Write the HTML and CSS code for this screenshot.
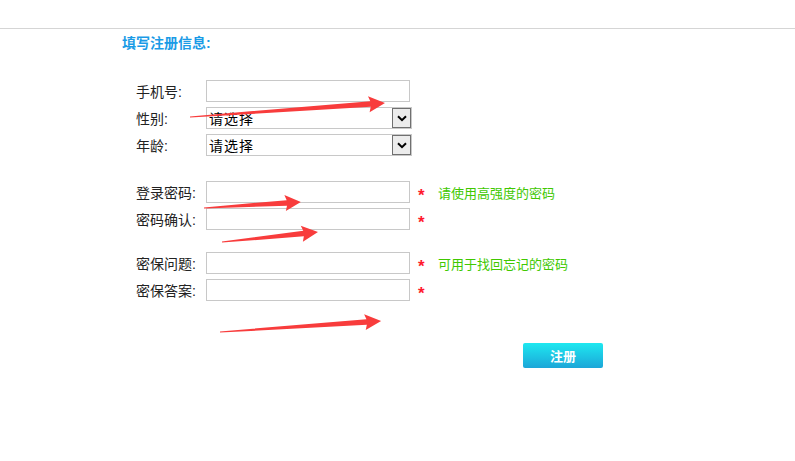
FILE: index.html
```html
<!DOCTYPE html>
<html lang="zh-CN">
  <head>
    <meta charset="UTF-8" />
    <meta name="viewport" content="width=device-width, initial-scale=1.0" />
    <title>填写注册信息</title>
    <link rel="stylesheet" href="styles.css">
  </head>
  <body>
    <div class="topbar"></div>

    <div class="container">
      <h2 class="title">填写注册信息:</h2>

      <form class="reg-form">
        <div class="group">
          <div class="row">
            <label for="phone">手机号:</label>
            <input type="text" id="phone" />
          </div>
          <div class="row">
            <label for="sex">性别:</label>
            <div class="select-wrap">
              <select id="sex">
                <option>请选择</option>
                <option>男</option>
                <option>女</option>
              </select>
              <span class="select-btn">
                <svg width="10" height="7" viewBox="0 0 10 7"><path d="M1 1.2 L5 5.2 L9 1.2" fill="none" stroke="#000" stroke-width="2"/></svg>
              </span>
            </div>
          </div>
          <div class="row">
            <label for="age">年龄:</label>
            <div class="select-wrap">
              <select id="age">
                <option>请选择</option>
              </select>
              <span class="select-btn">
                <svg width="10" height="7" viewBox="0 0 10 7"><path d="M1 1.2 L5 5.2 L9 1.2" fill="none" stroke="#000" stroke-width="2"/></svg>
              </span>
            </div>
          </div>
        </div>

        <div class="group group-pwd">
          <div class="row">
            <label for="pwd">登录密码:</label>
            <input type="password" id="pwd" />
            <span class="star">*</span>
            <span class="tip">请使用高强度的密码</span>
          </div>
          <div class="row">
            <label for="pwd2">密码确认:</label>
            <input type="password" id="pwd2" />
            <span class="star">*</span>
          </div>
        </div>

        <div class="group group-safe">
          <div class="row">
            <label for="question">密保问题:</label>
            <input type="text" id="question" />
            <span class="star">*</span>
            <span class="tip">可用于找回忘记的密码</span>
          </div>
          <div class="row">
            <label for="answer">密保答案:</label>
            <input type="text" id="answer" />
            <span class="star">*</span>
          </div>
        </div>

        <button type="button" class="btn-reg">注册</button>
      </form>
    </div>

    <!-- red annotation arrows drawn over the form -->
    <svg class="marks" width="795" height="461" viewBox="0 0 795 461">
      <g fill="#f83c3c">
        <polygon transform="translate(190 117) rotate(-4.1)" points="0,-0.6 181,-2.8 179,-8 195.5,0 179.5,8 181,2.8 0,0.6" />
        <polygon transform="translate(204 208) rotate(-3.5)" points="0,-0.6 83,-2.8 81,-8 97,0 81.5,8 83,2.8 0,0.6" />
        <polygon transform="translate(222 242) rotate(-5.9)" points="0,-0.6 82,-2.8 80,-8 96.5,0 80.5,8 82,2.8 0,0.6" />
        <polygon transform="translate(220 332) rotate(-3.9)" points="0,-0.6 147,-2.8 145,-8 161.5,0 145.5,8 147,2.8 0,0.6" />
      </g>
    </svg>
  </body>
</html>
```

FILE: styles.css
```css
body {
  margin: 0;
  font-family: "Liberation Sans", "Noto Sans CJK SC", sans-serif;
  font-size: 14px;
  color: #333;
  background-color: #fff;
  position: relative;
}
.topbar {
  height: 28px;
  border-bottom: 1px solid #d5d5d5;
}
.container {
  padding-left: 122px;
}
.title {
  margin: 0;
  height: 28px;
  line-height: 28px;
  font-size: 14px;
  font-weight: bold;
  color: #1a9be6;
}
.reg-form {
  margin-top: 23px;
  padding-left: 14px;
}
.group {
  display: flex;
  flex-direction: column;
  gap: 5px;
}
.group-pwd {
  margin-top: 25px;
}
.group-safe {
  margin-top: 22px;
}
.row {
  display: flex;
  align-items: center;
  height: 22px;
}
label {
  width: 70px;
  color: #222;
}
input {
  box-sizing: border-box;
  width: 204px;
  height: 22px;
  margin: 0;
  padding: 0 3px;
  border: 1px solid #c8c8c8;
  font-size: 14px;
}
input:focus {
  outline: none;
  border-color: #999;
}
.select-wrap {
  position: relative;
  width: 206px;
  height: 22px;
}
select {
  -webkit-appearance: none;
  appearance: none;
  box-sizing: border-box;
  width: 100%;
  height: 22px;
  margin: 0;
  padding: 0 2px;
  border: 1px solid #c8c8c8;
  border-radius: 0;
  background-color: #fff;
  font-family: "Noto Sans CJK SC", sans-serif;
  font-size: 14px;
  letter-spacing: 1px;
  color: #000;
}
.select-btn {
  position: absolute;
  top: 1px;
  right: 1px;
  box-sizing: border-box;
  width: 19px;
  height: 20px;
  border: 1px solid #707070;
  background-color: #ececec;
  display: flex;
  align-items: center;
  justify-content: center;
  pointer-events: none;
}
.star {
  width: 20px;
  margin-left: 8px;
  padding-top: 6px;
  color: #ff1a2e;
  font-size: 17px;
  font-weight: bold;
  line-height: 1;
}
.tip {
  font-size: 13px;
  color: #40c800;
}
.btn-reg {
  display: block;
  margin-top: 42px;
  margin-left: 387px;
  width: 80px;
  height: 25px;
  border: none;
  border-radius: 2px;
  background: linear-gradient(#1ee8f0, #1ca6d8);
  color: #fff;
  font-family: "Noto Sans CJK SC", sans-serif;
  font-size: 13px;
  font-weight: bold;
  cursor: pointer;
}
.marks {
  position: absolute;
  top: 0;
  left: 0;
  pointer-events: none;
}
```
